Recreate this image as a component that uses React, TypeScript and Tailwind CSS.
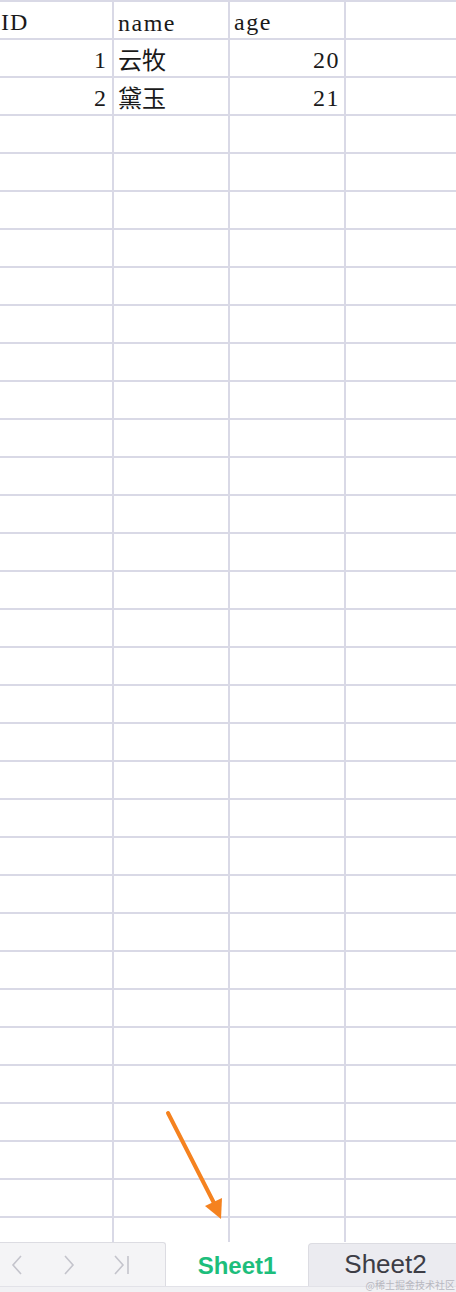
import React from "react";

const rows: [string, string, string][] = [
  ["ID", "name", "age"],
  ["1", "云牧", "20"],
  ["2", "黛玉", "21"],
];

const serif = { fontFamily: '"Liberation Serif", "Noto Sans CJK SC", serif' };

const App: React.FC = () => {
  const allRows = Array.from({ length: 33 }, (_, i) => rows[i] ?? ["", "", ""]);

  return (
    <div className="relative w-[456px] h-[1292px] overflow-hidden bg-white">
      {/* grid */}
      <div className="h-[1242px] overflow-hidden border-t-2 border-[#d9d9e6]" style={serif}>
        {allRows.map((r, i) => (
          <div key={i} className="flex h-[38px] border-b-2 border-[#d9d9e6] text-[24px] text-[#1a1a1a] leading-none">
            <div className={`w-[114px] shrink-0 border-r-2 border-[#d9d9e6] flex items-center pt-[4px] tracking-[1px] ${i === 0 ? "justify-start pl-[1px]" : "justify-end pr-[5px]"}`}>
              {r[0]}
            </div>
            <div className={`w-[116px] shrink-0 border-r-2 border-[#d9d9e6] flex items-center pl-[4px] pt-[5px] ${i === 0 ? "tracking-[1.5px]" : ""}`}>
              {r[1]}
            </div>
            <div className={`w-[116px] shrink-0 border-r-2 border-[#d9d9e6] flex items-center pt-[4px] tracking-[1.5px] ${i === 0 ? "justify-start pl-[4px]" : "justify-end pr-[4px]"}`}>
              {r[2]}
            </div>
            <div className="flex-1" />
          </div>
        ))}
      </div>

      {/* sheet tabs */}
      <div className="flex h-[44px]" style={{ fontFamily: '"Liberation Sans", Arial, sans-serif' }}>
        <div className="w-[166px] shrink-0 bg-[#f4f4f6] border-t border-r border-[#dcdce2] rounded-tr-[3px] flex items-center text-[#c4c4cc]">
          <svg className="ml-[10px]" width="14" height="22" viewBox="0 0 14 22" fill="none" stroke="currentColor" strokeWidth="1.6">
            <path d="M11 2 L3 11 L11 20" />
          </svg>
          <svg className="ml-[38px]" width="14" height="22" viewBox="0 0 14 22" fill="none" stroke="currentColor" strokeWidth="1.6">
            <path d="M3 2 L11 11 L3 20" />
          </svg>
          <svg className="ml-[36px]" width="20" height="22" viewBox="0 0 20 22" fill="none" stroke="currentColor" strokeWidth="1.6">
            <path d="M3 2 L11 11 L3 20" />
            <path d="M16 2 L16 20" />
          </svg>
        </div>
        <div className="w-[142px] shrink-0 bg-white flex items-center justify-center pt-[4px] text-[24px] font-bold text-[#1dbe7c]">
          Sheet1
        </div>
        <div className="flex-1 mt-[1px] bg-[#ebebf0] border-t border-l border-[#dcdce2] rounded-tl-[4px] flex items-center justify-center pb-[2px] pl-[6px] text-[26px] text-[#3d3d46]">
          Sheet2
        </div>
      </div>
      <div className="h-[6px] bg-[#f1f1f4] border-t border-[#e2e2e8]" />

      {/* watermark */}
      <div
        className="absolute right-[1px] bottom-[2px] text-[10px] leading-none text-[#b8b8c0]"
        style={{ fontFamily: '"Noto Sans CJK SC", sans-serif' }}
      >
        @稀土掘金技术社区
      </div>

      {/* annotation arrow */}
      <svg className="absolute left-0 top-0 pointer-events-none" width="456" height="1292">
        <line x1="168" y1="1113" x2="214" y2="1203" stroke="#f5821f" strokeWidth="4" strokeLinecap="round" />
        <polygon points="221,1219 205,1206 222,1198" fill="#f5821f" />
      </svg>
    </div>
  );
};

export default App;
